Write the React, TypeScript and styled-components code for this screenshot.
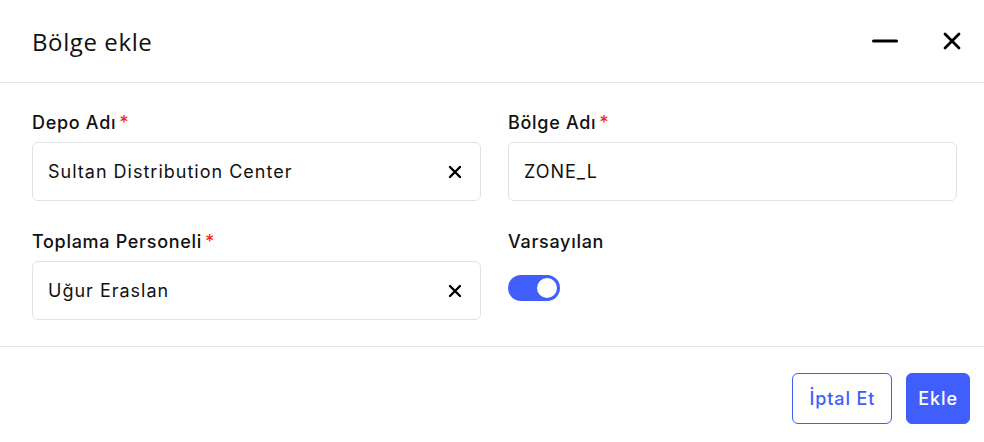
import React, { useState } from 'react';
import styled, { createGlobalStyle } from 'styled-components';

const GlobalStyle = createGlobalStyle`
  html, body {
    margin: 0;
    padding: 0;
    background: #ffffff;
  }
  * {
    box-sizing: border-box;
  }
`;

const Modal = styled.div`
  width: 984px;
  height: 442px;
  background: #fff;
  display: flex;
  flex-direction: column;
  font-family: Inter, 'Noto Sans', sans-serif;
  color: #111;
`;

const Header = styled.div`
  height: 83px;
  padding: 0 23px 0 32px;
  display: flex;
  align-items: center;
  justify-content: space-between;
  border-bottom: 1px solid #e3e7eb;
`;

const Title = styled.h2`
  margin: 0;
  font-family: 'Open Sans', 'Noto Sans', sans-serif;
  font-weight: 400;
  font-size: 24px;
  letter-spacing: 0.6px;
  color: #111;
`;

const HeaderActions = styled.div`
  display: flex;
  align-items: center;
  gap: 45px;
`;

const IconButton = styled.button`
  border: none;
  background: none;
  padding: 0;
  display: flex;
  align-items: center;
  justify-content: center;
  cursor: pointer;
  color: #000;
`;

const Body = styled.div`
  padding: 27px 27px 26px 32px;
  display: grid;
  grid-template-columns: 1fr 1fr;
  column-gap: 27px;
  row-gap: 28px;
  border-bottom: 1px solid #e3e7eb;
`;

const Field = styled.div`
  display: flex;
  flex-direction: column;
`;

const Label = styled.label`
  height: 25px;
  line-height: 25px;
  margin-bottom: 7px;
  font-size: 18px;
  font-weight: 500;
  letter-spacing: 0.7px;
  color: #111;
  display: flex;
  align-items: center;
  gap: 3px;
`;

const Required = styled.span`
  color: #ff1f1f;
  font-size: 18px;
`;

const InputBox = styled.div`
  height: 59px;
  border: 1px solid #dfe3e8;
  border-radius: 6px;
  padding: 0 18px 0 15px;
  display: flex;
  align-items: center;
  justify-content: space-between;
`;

const InputText = styled.span`
  font-size: 18px;
  letter-spacing: 1px;
  color: #111;
`;

const ToggleTrack = styled.button<{ $on: boolean }>`
  margin-top: 14px;
  width: 52px;
  height: 26px;
  border: none;
  border-radius: 13px;
  padding: 3px;
  background: ${(p) => (p.$on ? '#3f5efb' : '#cfd4da')};
  display: flex;
  justify-content: ${(p) => (p.$on ? 'flex-end' : 'flex-start')};
  cursor: pointer;
`;

const ToggleKnob = styled.span`
  width: 20px;
  height: 20px;
  border-radius: 50%;
  background: #fff;
`;

const Footer = styled.div`
  flex: 1;
  padding: 26px 14px 0 0;
  display: flex;
  justify-content: flex-end;
  align-items: flex-start;
  gap: 14px;
`;

const Button = styled.button<{ $primary?: boolean }>`
  height: 51px;
  padding: 0 ${(p) => (p.$primary ? '11px' : '16px')};
  border-radius: 6px;
  border: 1px solid #3f5efb;
  background: ${(p) => (p.$primary ? '#3f5efb' : '#fff')};
  color: ${(p) => (p.$primary ? '#fff' : '#3f5efb')};
  font-family: Inter, 'Noto Sans', sans-serif;
  font-size: 18px;
  font-weight: 500;
  letter-spacing: 0.9px;
  cursor: pointer;
`;

const ClearIcon = () => (
  <svg width="14" height="14" viewBox="0 0 14 14">
    <path d="M2 2 L12 12 M12 2 L2 12" stroke="#000" strokeWidth="2.4" strokeLinecap="round" />
  </svg>
);

function App() {
  const [isDefault, setIsDefault] = useState(true);

  return (
    <>
      <GlobalStyle />
      <Modal>
        <Header>
          <Title>Bölge ekle</Title>
          <HeaderActions>
            <IconButton aria-label="minimize">
              <svg width="26" height="18" viewBox="0 0 26 18">
                <path d="M1.5 9 H24.5" stroke="#000" strokeWidth="3" strokeLinecap="round" />
              </svg>
            </IconButton>
            <IconButton aria-label="close">
              <svg width="18" height="18" viewBox="0 0 18 18">
                <path d="M2 2 L16 16 M16 2 L2 16" stroke="#000" strokeWidth="2.8" strokeLinecap="round" />
              </svg>
            </IconButton>
          </HeaderActions>
        </Header>
        <Body>
          <Field>
            <Label>
              Depo Adı<Required>*</Required>
            </Label>
            <InputBox>
              <InputText>Sultan Distribution Center</InputText>
              <ClearIcon />
            </InputBox>
          </Field>
          <Field>
            <Label>
              Bölge Adı<Required>*</Required>
            </Label>
            <InputBox>
              <InputText>ZONE_L</InputText>
            </InputBox>
          </Field>
          <Field>
            <Label>
              Toplama Personeli<Required>*</Required>
            </Label>
            <InputBox>
              <InputText>Uğur Eraslan</InputText>
              <ClearIcon />
            </InputBox>
          </Field>
          <Field>
            <Label>Varsayılan</Label>
            <ToggleTrack $on={isDefault} onClick={() => setIsDefault(!isDefault)}>
              <ToggleKnob />
            </ToggleTrack>
          </Field>
        </Body>
        <Footer>
          <Button>İptal Et</Button>
          <Button $primary>Ekle</Button>
        </Footer>
      </Modal>
    </>
  );
}

export default App;
